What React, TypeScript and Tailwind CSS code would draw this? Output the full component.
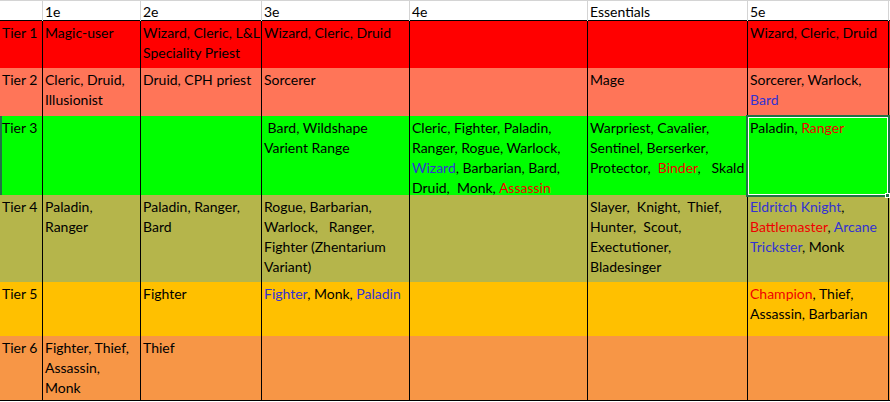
import type { ReactNode } from "react";

type Seg = string | [string, "b" | "r"];
type Line = Seg | Seg[];

const cols = "grid-cols-[43px_98px_121px_148px_178px_160px_141px]";

const headers = ["", "1e", "2e", "3e", "4e", "Essentials", "5e"];

const tiers: { label: string; bg: string; h: string; cells: Line[][] }[] = [
  {
    label: "Tier 1",
    bg: "bg-[#ff0000]",
    h: "h-[47px]",
    cells: [
      ["Magic-user"],
      ["Wizard, Cleric, L&L", "Speciality Priest"],
      ["Wizard, Cleric, Druid"],
      [],
      [],
      ["Wizard, Cleric, Druid"],
    ],
  },
  {
    label: "Tier 2",
    bg: "bg-[#ff7558]",
    h: "h-[48px]",
    cells: [
      ["Cleric, Druid,", "Illusionist"],
      ["Druid, CPH priest"],
      ["Sorcerer"],
      [],
      ["Mage"],
      ["Sorcerer, Warlock,", [["Bard", "b"]]],
    ],
  },
  {
    label: "Tier 3",
    bg: "bg-[#00ff00]",
    h: "h-[79px]",
    cells: [
      [],
      [],
      [" Bard, Wildshape", "Varient Range"],
      [
        "Cleric, Fighter, Paladin,",
        "Ranger, Rogue, Warlock,",
        [["Wizard", "b"], ", Barbarian, Bard,"],
        ["Druid,  Monk, ", ["Assassin", "r"]],
      ],
      ["Warpriest, Cavalier,", "Sentinel, Berserker,", ["Protector,  ", ["Binder", "r"], ",   Skald"]],
      [["Paladin, ", ["Ranger", "r"]]],
    ],
  },
  {
    label: "Tier 4",
    bg: "bg-[#b5b54b]",
    h: "h-[87px]",
    cells: [
      ["Paladin,", "Ranger"],
      ["Paladin, Ranger,", "Bard"],
      ["Rogue, Barbarian,", "Warlock,   Ranger,", "Fighter (Zhentarium", "Variant)"],
      [],
      ["Slayer,  Knight,  Thief,", "Hunter,  Scout,", "Exectutioner,", "Bladesinger"],
      [
        [["Eldritch Knight", "b"], ","],
        [["Battlemaster", "r"], ", ", ["Arcane", "b"]],
        [["Trickster", "b"], ", Monk"],
      ],
    ],
  },
  {
    label: "Tier 5",
    bg: "bg-[#ffc000]",
    h: "h-[54px]",
    cells: [
      [],
      ["Fighter"],
      [[["Fighter", "b"], ", Monk, ", ["Paladin", "b"]]],
      [],
      [],
      [[["Champion", "r"], ", Thief,"], "Assassin, Barbarian"],
    ],
  },
  {
    label: "Tier 6",
    bg: "bg-[#f79646]",
    h: "h-[65px]",
    cells: [["Fighter, Thief,", "Assassin,", "Monk"], ["Thief"], [], [], [], []],
  },
];

function seg(s: Seg, i: number): ReactNode {
  if (typeof s === "string") return <span key={i}>{s}</span>;
  return (
    <span key={i} className={s[1] === "b" ? "text-[#3232d2]" : "text-[#f00000]"}>
      {s[0]}
    </span>
  );
}

// a line is either plain text, a single coloured run, or a list of runs
function renderLine(l: Line, i: number) {
  let parts: Seg[];
  if (typeof l === "string") parts = [l];
  else if (l.length === 2 && (l[1] === "b" || l[1] === "r")) parts = [l as Seg];
  else parts = l as Seg[];
  return (
    <div key={i} className="whitespace-pre">
      {parts.map(seg)}
    </div>
  );
}

export default function App() {
  return (
    <div
      className="relative w-[890px] h-[402px] bg-white text-black text-[14px] leading-[20px] overflow-hidden"
      style={{ fontFamily: "Lato, 'Liberation Sans', sans-serif" }}
    >
      {/* header row */}
      <div className={`grid ${cols} h-[21px] border-t border-[#d4d4d4] border-b border-b-black`}>
        {headers.map((h, i) => (
          <div key={i} className="border-r border-[#d4d4d4] pl-[2px] pt-px leading-[19px]">
            {h}
          </div>
        ))}
      </div>

      {tiers.map((t, ti) => (
        <div key={ti} className={`grid ${cols} ${t.h} ${t.bg} ${ti === 5 ? "border-b border-black" : ""}`}>
          <div
            className={`border-r border-black pl-[2px] pt-[2px] ${
              ti === 2 ? "shadow-[inset_2px_0_0_#217346]" : ""
            }`}
          >
            {t.label}
          </div>
          {t.cells.map((c, ci) => (
            <div key={ci} className="border-r border-black pl-[2px] pt-[2px] overflow-hidden">
              {c.map(renderLine)}
            </div>
          ))}
        </div>
      ))}

      {/* selected cell */}
      <div className="absolute left-[746px] top-[115px] w-[144px] h-[82px] border-2 border-[#217346] pointer-events-none">
        <div className="h-full w-full border border-white" />
      </div>
      <div className="absolute left-[885px] top-[193px] w-[5px] h-[5px] bg-[#217346] border border-white" />
    </div>
  );
}
